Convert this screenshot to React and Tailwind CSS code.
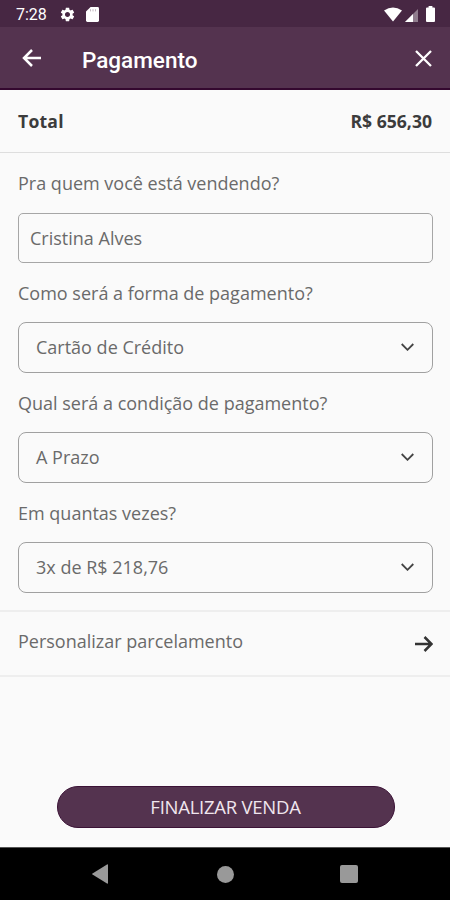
// ============================================
// Payment Screen
// ============================================
// Last step of a sale. Shows:
//   - Sale total
//   - Customer, payment method and condition
//   - Installments
//   - Button to finish the sale
// ============================================

import React, { useState } from 'react';

// Phone status bar (clock, settings, sd card / wifi, signal, battery)
const StatusBar = () => (
  <div className="flex h-[27px] items-center justify-between bg-[#472743] pl-4 pr-[15px] pt-px text-white">
    <div className="flex items-center">
      <span className="w-[31px] whitespace-nowrap pt-0.5 font-['Roboto',sans-serif] text-[16px] leading-none">7:28</span>
      <svg className="ml-[12px] h-[17px] w-[17px]" viewBox="0 0 24 24" fill="currentColor">
        <path d="M19.14 12.94c.04-.3.06-.61.06-.94 0-.32-.02-.64-.07-.94l2.03-1.58c.18-.14.23-.41.12-.61l-1.92-3.32c-.12-.22-.37-.29-.59-.22l-2.39.96c-.5-.38-1.03-.7-1.62-.94l-.36-2.54c-.04-.24-.24-.41-.48-.41h-3.84c-.24 0-.43.17-.47.41l-.36 2.54c-.59.24-1.13.57-1.62.94l-2.39-.96c-.22-.08-.47 0-.59.22L2.74 8.87c-.12.21-.08.47.12.61l2.03 1.58c-.05.3-.09.63-.09.94s.02.64.07.94l-2.03 1.58c-.18.14-.23.41-.12.61l1.92 3.32c.12.22.37.29.59.22l2.39-.96c.5.38 1.03.7 1.62.94l.36 2.54c.05.24.24.41.48.41h3.84c.24 0 .44-.17.47-.41l.36-2.54c.59-.24 1.13-.56 1.62-.94l2.39.96c.22.08.47 0 .59-.22l1.92-3.32c.12-.22.07-.47-.12-.61l-2.01-1.58zM12 15.6c-1.98 0-3.6-1.62-3.6-3.6s1.62-3.6 3.6-3.6 3.6 1.62 3.6 3.6-1.62 3.6-3.6 3.6z" />
      </svg>
      <svg className="ml-[10px] h-[15px] w-[13px]" viewBox="0 0 13 15">
        <path d="M4.6 0H11.6Q13 0 13 1.4V13.6Q13 15 11.6 15H1.4Q0 15 0 13.6V4.6Z" fill="#fff" />
        <path d="M4.5 2.2V4.4M7 2.2V4.4M9.5 2.2V4.4" stroke="#472743" strokeWidth="0.8" opacity="0.4" />
      </svg>
    </div>
    <div className="flex items-center">
      <svg className="h-[15px] w-[18px]" viewBox="0 0 18 15">
        <path d="M0 3.4Q9 -2.6 18 3.4L9 14.6Z" fill="#fff" />
      </svg>
      <svg className="ml-[3px] mt-[2px] h-[13px] w-[13px]" viewBox="0 0 13 13">
        <path d="M13 0V13H0Z" fill="#fff" opacity="0.4" />
        <path d="M8 5V13H0Z" fill="#fff" />
      </svg>
      <svg className="ml-[8px] h-[16px] w-[9px]" viewBox="0 0 9 16">
        <path d="M2.6 0H6.4V1.6H8Q9 1.6 9 2.6V15Q9 16 8 16H1Q0 16 0 15V2.6Q0 1.6 1 1.6H2.6Z" fill="#fff" />
      </svg>
    </div>
  </div>
);

const Header = () => (
  <header className="flex h-[63px] items-center border-b-2 border-[#34082f] bg-[#54334f] pl-[22px] pr-[18px] pt-[3px] text-white">
    <button className="-mt-0.5" aria-label="Voltar">
      <svg className="h-[18px] w-[19px]" viewBox="0 0 19 18" fill="none" stroke="currentColor" strokeWidth="2.5">
        <path d="M19 9H2M10 1L2 9L10 17" />
      </svg>
    </button>
    <h1 className="ml-[41px] mt-[3px] flex-1 font-['Roboto',sans-serif] text-[22.5px] font-medium leading-none">Pagamento</h1>
    <button className="-mt-0.5" aria-label="Fechar">
      <svg className="h-[17px] w-[17px]" viewBox="0 0 17 17" fill="none" stroke="currentColor" strokeWidth="2.3">
        <path d="M1 1L16 16M16 1L1 16" />
      </svg>
    </button>
  </header>
);

const SelectField = ({ label, value }) => (
  <div>
    <label className="block h-6 text-[18px] leading-6">{label}</label>
    <button className="mt-[17px] flex h-[51px] w-full items-center justify-between rounded-lg border border-[#a0a0a0] pb-px pl-[17px] pr-[18px] text-left">
      <span className="text-[18px]">{value}</span>
      <svg className="h-[8px] w-[13px]" viewBox="0 0 13 8" fill="none" stroke="#444" strokeWidth="1.8">
        <path d="M0.7 1L6.5 6.8L12.3 1" />
      </svg>
    </button>
  </div>
);

const App = () => {
  const [customer, setCustomer] = useState('Cristina Alves');

  return (
    <div className="flex h-[900px] w-[450px] flex-col overflow-hidden bg-[#fafafa] font-['Open_Sans','Noto_Sans',sans-serif] text-[#6a6a6a]">
      <StatusBar />
      <Header />

      {/* Total */}
      <div className="flex h-[63px] items-center justify-between border-b border-[#dedede] px-[18px] pt-px text-[17.6px] font-bold text-[#3c3c3c]">
        <span className="tracking-[0.2px]">Total</span>
        <span>R$ 656,30</span>
      </div>

      {/* Form */}
      <div className="flex h-[457px] flex-col gap-[18px] pl-[18px] pr-[17px] pt-[18px]">
        <div>
          <label className="block h-6 text-[18px] leading-6">Pra quem você está vendendo?</label>
          <input
            className="mt-[18px] block h-[50px] w-full rounded-[5px] border border-[#a6a6a6] pb-px pl-[11px] text-[18px] outline-none"
            value={customer}
            onChange={(e) => setCustomer(e.target.value)}
          />
        </div>
        <SelectField label="Como será a forma de pagamento?" value="Cartão de Crédito" />
        <SelectField label="Qual será a condição de pagamento?" value="A Prazo" />
        <SelectField label="Em quantas vezes?" value="3x de R$ 218,76" />
      </div>

      {/* Custom installments */}
      <div className="flex h-[67px] items-center justify-between border-y-2 border-[#eeeeee] pl-[18px] pr-[17px]">
        <span className="mb-[4px] text-[18px]">Personalizar parcelamento</span>
        <svg className="h-[16px] w-[18px]" viewBox="0 0 18 16" fill="none" stroke="#333" strokeWidth="2.5">
          <path d="M0 8H16.4M9.5 1L16.5 8L9.5 15" />
        </svg>
      </div>

      <div className="flex flex-1 items-end justify-center pb-[19px] pl-px">
        <button className="h-[42px] w-[338px] rounded-full border border-[#3b1236] bg-[#54334f] text-[18.5px] tracking-[-0.25px] text-[#f0e6ee]">FINALIZAR VENDA</button>
      </div>

      {/* Android navigation */}
      <div className="flex h-[53px] items-center border-t border-[#555] bg-black pl-[92px] text-[#999]">
        <svg className="h-[20px] w-[16px]" viewBox="0 0 16 20" fill="currentColor">
          <path d="M16 1V19Q16 20 15 19.5L0.5 10.6Q-0.3 10 0.5 9.4L15 0.5Q16 0 16 1Z" />
        </svg>
        <span className="ml-[109px] h-[17px] w-[17px] rounded-full bg-[#999]" />
        <span className="ml-[106px] h-[18px] w-[18px] rounded-[2px] bg-[#999]" />
      </div>
    </div>
  );
};

export default App;
